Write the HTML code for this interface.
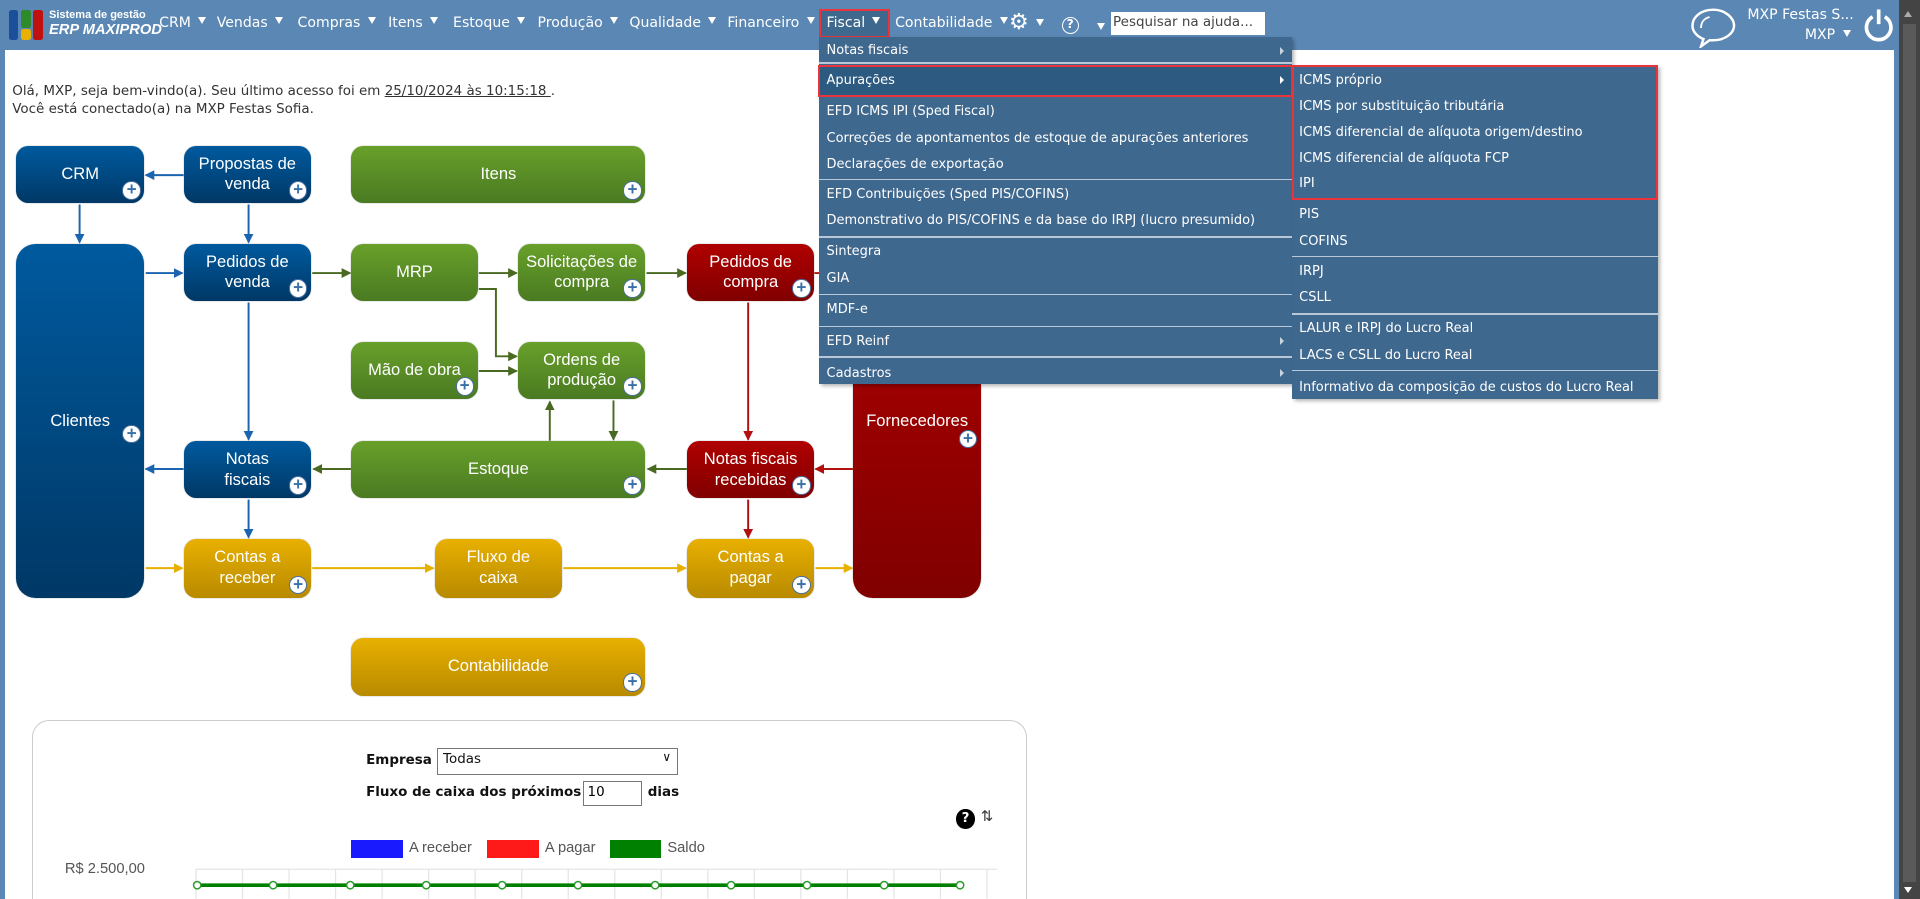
<!DOCTYPE html>
<html><head><meta charset="utf-8">
<style>
html{zoom:1.22449;overflow:hidden;height:734px;width:1568px}
*{box-sizing:border-box;margin:0;padding:0}
body{width:1568px;height:734px;overflow:hidden;position:relative;background:#fff;font-family:"DejaVu Sans","Liberation Sans",sans-serif;}
#wrap{position:absolute;left:0;top:0;width:1568px;height:734px;overflow:hidden}
.abs{position:absolute}
#top{left:0;top:0;width:1568px;height:41px;background:#5b87b4}
.nav{position:absolute;top:12px;color:#fff;font-size:11.5px;white-space:nowrap}
.tri{display:inline-block;width:0;height:0;border-left:4px solid transparent;border-right:4px solid transparent;border-top:6px solid #fff;margin-left:6px;vertical-align:2px}
.box{position:absolute;border-radius:10px;color:#fff;font-family:"Liberation Sans",sans-serif;font-size:13.5px;text-align:center;display:flex;align-items:center;justify-content:center;line-height:17px;box-shadow:0 0 1px #999}
.b{background:linear-gradient(#005a9e,#003866)}
.g{background:linear-gradient(#68a02a,#4a7a22)}
.r{background:linear-gradient(#b00000,#800000)}
.y{background:linear-gradient(#e8b000,#b88a00)}
.plus{position:absolute;right:3px;bottom:3px;width:15px;height:15px;border-radius:50%;background:#fff;border:1px solid #4a6fa0;color:#3a6fa8;font-weight:bold;font-size:14px;line-height:12px;text-align:center}
.menu{position:absolute;background:#3f688f;color:#fff;font-size:10.6px;box-shadow:2px 2px 3px rgba(0,0,0,.3)}
.mi{position:absolute;left:6px;white-space:nowrap}
.sep{position:absolute;left:0;right:0;height:1px;background:#b8c8d8}
.arr{position:absolute;right:6px;width:0;height:0;border-top:4px solid transparent;border-bottom:4px solid transparent;border-left:4px solid #c8d4e0}
.txt{font-size:11px;color:#333}
</style></head><body><div id="wrap">
<div id="top" class="abs"></div>
<div class="abs" style="left:7px;top:8px;width:8px;height:25px;background:#1c4f9a;border-radius:2px"></div>
<div class="abs" style="left:17px;top:8px;width:8px;height:15px;background:#2f8a2a;border-radius:2px"></div>
<div class="abs" style="left:17px;top:24px;width:8px;height:9px;background:#e8b000;border-radius:2px"></div>
<div class="abs" style="left:27px;top:8px;width:8px;height:25px;background:#c01010;border-radius:2px"></div>
<div class="abs" style="left:40px;top:7px;color:#fff;font-size:9px;font-weight:bold;font-family:'Liberation Sans',sans-serif">Sistema de gestão</div>
<div class="abs" style="left:40px;top:18px;color:#fff;font-size:12px;font-weight:bold;font-style:italic;font-family:'Liberation Sans',sans-serif">ERP MAXIPROD</div>
<div class="nav" style="left:130px">CRM<span class="tri"></span></div>
<div class="nav" style="left:177px">Vendas<span class="tri"></span></div>
<div class="nav" style="left:243px">Compras<span class="tri"></span></div>
<div class="nav" style="left:317px">Itens<span class="tri"></span></div>
<div class="nav" style="left:370px">Estoque<span class="tri"></span></div>
<div class="nav" style="left:439px">Produção<span class="tri"></span></div>
<div class="nav" style="left:514px">Qualidade<span class="tri"></span></div>
<div class="nav" style="left:594px">Financeiro<span class="tri"></span></div>
<div class="abs" style="left:669px;top:7px;width:58px;height:24px;background:#3f688f;border:2px solid #e8343a"></div>
<div class="nav" style="left:675px">Fiscal<span class="tri"></span></div>
<div class="nav" style="left:731px">Contabilidade<span class="tri"></span></div>
<div class="nav" style="left:824px;top:8px;font-size:18px">⚙<span class="tri"></span></div>
<div class="abs" style="left:867px;top:14px;width:14px;height:14px;border:1.5px solid #fff;border-radius:50%;color:#fff;font-size:10px;text-align:center;line-height:11px;font-weight:bold">?</div>
<div class="abs" style="left:890px;top:12px"><span class="tri"></span></div>
<div class="abs" style="left:907px;top:10px;width:126px;height:19px;background:#fff;font-size:11px;color:#444;padding:2px 2px">Pesquisar na ajuda...</div>
<svg class="abs" style="left:1380px;top:5px" width="38" height="34" viewBox="0 0 38 34"><path d="M19 3C9 3 2 9 2 16c0 5 4 9 9 11l-2 6 7-5c1 0 2 0 3 0 10 0 17-6 17-12S29 3 19 3z" fill="none" stroke="#fff" stroke-width="2"/><path d="M9 18c0-5 3-8 7-9" fill="none" stroke="#fff" stroke-width="1.5"/></svg>
<div class="abs" style="left:1427px;top:6px;color:#fff;font-size:11.5px">MXP Festas S...</div>
<div class="abs" style="left:1474px;top:22px;color:#fff;font-size:11.5px">MXP<span class="tri"></span></div>
<svg class="abs" style="left:1522px;top:6px" width="24" height="28" viewBox="0 0 24 28"><path d="M7 8A10 10 0 1 0 17 8" fill="none" stroke="#fff" stroke-width="3"/><path d="M12 2v12" stroke="#fff" stroke-width="3"/></svg>
<div class="abs" style="left:0;top:41px;width:4px;height:693px;background:#5b87b4"></div>
<div class="abs" style="left:1547px;top:0;width:4px;height:734px;background:#5b87b4"></div>
<div class="abs" style="left:1551px;top:0;width:17px;height:734px;background:#444"></div>
<div class="abs" style="left:1555px;top:9px;width:0;height:0;border-left:4px solid transparent;border-right:4px solid transparent;border-bottom:5px solid #aaa"></div>
<div class="abs" style="left:1554px;top:20px;width:11px;height:700px;background:#5a5a5a"></div>
<div class="abs" style="left:1555px;top:724px;width:0;height:0;border-left:4px solid transparent;border-right:4px solid transparent;border-top:5px solid #fff"></div>

<div class="abs txt" style="left:10px;top:69px">Olá, MXP, seja bem-vindo(a). Seu último acesso foi em <u>25/10/2024 às 10:15:18 </u>.</div>
<div class="abs txt" style="left:10px;top:83px">Você está conectado(a) na MXP Festas Sofia.</div>

<svg class="abs" style="left:0;top:0" width="840" height="600">
<defs>
<marker id="mb" markerWidth="8" markerHeight="8" refX="7" refY="4" orient="auto" markerUnits="userSpaceOnUse"><path d="M0 0L8 4L0 8z" fill="#1a64b0"/></marker>
<marker id="mg" markerWidth="8" markerHeight="8" refX="7" refY="4" orient="auto" markerUnits="userSpaceOnUse"><path d="M0 0L8 4L0 8z" fill="#4a6a22"/></marker>
<marker id="mr" markerWidth="8" markerHeight="8" refX="7" refY="4" orient="auto" markerUnits="userSpaceOnUse"><path d="M0 0L8 4L0 8z" fill="#b01010"/></marker>
<marker id="my" markerWidth="8" markerHeight="8" refX="7" refY="4" orient="auto" markerUnits="userSpaceOnUse"><path d="M0 0L8 4L0 8z" fill="#e8b000"/></marker>
</defs>
<g stroke="#1a64b0" stroke-width="1.6" fill="none">
<path d="M150 143H119" marker-end="url(#mb)"/>
<path d="M65 167V198" marker-end="url(#mb)"/>
<path d="M203 167V198" marker-end="url(#mb)"/>
<path d="M119 223H149" marker-end="url(#mb)"/>
<path d="M203 247V359" marker-end="url(#mb)"/>
<path d="M150 383H119" marker-end="url(#mb)"/>
<path d="M203 408V439" marker-end="url(#mb)"/>
</g>
<g stroke="#4a6a22" stroke-width="1.6" fill="none">
<path d="M255 223H286" marker-end="url(#mg)"/>
<path d="M391 223H422" marker-end="url(#mg)"/>
<path d="M528 223H560" marker-end="url(#mg)"/>
<path d="M391 236H405V291H422" marker-end="url(#mg)"/>
<path d="M391 303H422" marker-end="url(#mg)"/>
<path d="M449 360V328" marker-end="url(#mg)"/>
<path d="M501 327V359" marker-end="url(#mg)"/>
<path d="M287 383H256" marker-end="url(#mg)"/>
<path d="M561 383H529" marker-end="url(#mg)"/>
</g>
<g stroke="#b01010" stroke-width="1.6" fill="none">
<path d="M665 223H697"/>
<path d="M611 247V359" marker-end="url(#mr)"/>
<path d="M697 383H666" marker-end="url(#mr)"/>
<path d="M611 408V439" marker-end="url(#mr)"/>
</g>
<g stroke="#e8b000" stroke-width="1.6" fill="none">
<path d="M119 464H149" marker-end="url(#my)"/>
<path d="M255 464H354" marker-end="url(#my)"/>
<path d="M460 464H560" marker-end="url(#my)"/>
<path d="M666 464H696" marker-end="url(#my)"/>
</g>
</svg>

<div class="box b" style="left:13px;top:119px;width:105px;height:47px">CRM<div class="plus">+</div></div>
<div class="box b" style="left:150px;top:119px;width:104px;height:47px">Propostas de<br>venda<div class="plus">+</div></div>
<div class="box g" style="left:287px;top:119px;width:240px;height:47px">Itens<div class="plus">+</div></div>
<div class="box b" style="left:13px;top:199px;width:105px;height:289px;border-radius:16px;align-items:flex-start;padding-top:137px">Clientes<div class="plus" style="bottom:126px">+</div></div>
<div class="box b" style="left:150px;top:199px;width:104px;height:47px">Pedidos de<br>venda<div class="plus">+</div></div>
<div class="box g" style="left:287px;top:199px;width:103px;height:47px">MRP</div>
<div class="box g" style="left:423px;top:199px;width:104px;height:47px">Solicitações de<br>compra<div class="plus">+</div></div>
<div class="box r" style="left:561px;top:199px;width:104px;height:47px">Pedidos de<br>compra<div class="plus">+</div></div>
<div class="box r" style="left:697px;top:199px;width:104px;height:289px;border-radius:16px;align-items:flex-start;padding-top:137px">Fornecedores<div class="plus" style="bottom:122px">+</div></div>
<div class="box g" style="left:287px;top:279px;width:103px;height:47px">Mão de obra<div class="plus">+</div></div>
<div class="box g" style="left:423px;top:279px;width:104px;height:47px">Ordens de<br>produção<div class="plus">+</div></div>
<div class="box b" style="left:150px;top:360px;width:104px;height:47px">Notas<br>fiscais<div class="plus">+</div></div>
<div class="box g" style="left:287px;top:360px;width:240px;height:47px">Estoque<div class="plus">+</div></div>
<div class="box r" style="left:561px;top:360px;width:104px;height:47px">Notas fiscais<br>recebidas<div class="plus">+</div></div>
<div class="box y" style="left:150px;top:440px;width:104px;height:48px">Contas a<br>receber<div class="plus">+</div></div>
<div class="box y" style="left:355px;top:440px;width:104px;height:48px">Fluxo de<br>caixa</div>
<div class="box y" style="left:561px;top:440px;width:104px;height:48px">Contas a<br>pagar<div class="plus">+</div></div>
<div class="box y" style="left:287px;top:521px;width:240px;height:47px">Contabilidade<div class="plus">+</div></div>

<div class="abs" style="left:26px;top:588px;width:813px;height:147px;border:1px solid #ccc;border-bottom:none;border-radius:14px 14px 0 0"></div>
<div class="abs" style="left:299px;top:615px;font-size:11px;font-weight:bold;color:#111">Empresa</div>
<div class="abs" style="left:357px;top:611px;width:197px;height:22px;border:1px solid #777;font-size:11px;padding:2px 4px;color:#111">Todas<span style="position:absolute;right:5px;top:1px;font-size:10px">&#8744;</span></div>
<div class="abs" style="left:299px;top:641px;font-size:11px;font-weight:bold;color:#111">Fluxo de caixa dos próximos</div>
<div class="abs" style="left:476px;top:638px;width:48px;height:20px;border:1px solid #777;font-size:11px;padding:2px 3px">10</div>
<div class="abs" style="left:529px;top:641px;font-size:11px;font-weight:bold;color:#111">dias</div>
<div class="abs" style="left:781px;top:661px;width:15px;height:16px;border-radius:50%;background:#000;color:#fff;font-size:11px;font-weight:bold;text-align:center;line-height:16px">?</div>
<div class="abs" style="left:801px;top:660px;font-size:12px;color:#333">⇅</div>
<div class="abs" style="left:287px;top:686px;width:42px;height:15px;background:#1a1aff"></div>
<div class="abs" style="left:334px;top:686px;font-size:12px;color:#555;font-family:'Liberation Sans',sans-serif">A receber</div>
<div class="abs" style="left:398px;top:686px;width:42px;height:15px;background:#ff1a1a"></div>
<div class="abs" style="left:445px;top:686px;font-size:12px;color:#555;font-family:'Liberation Sans',sans-serif">A pagar</div>
<div class="abs" style="left:498px;top:686px;width:42px;height:15px;background:#008000"></div>
<div class="abs" style="left:545px;top:686px;font-size:12px;color:#555;font-family:'Liberation Sans',sans-serif">Saldo</div>
<div class="abs" style="left:53px;top:703px;font-size:12px;color:#555;font-family:'Liberation Sans',sans-serif">R$ 2.500,00</div>
<svg class="abs" style="left:120px;top:700px" width="700" height="34">
<g stroke="#e4e4e4"><path d="M40 10H694"/><path d="M40 10V34M78 10V34M116 10V34M154 10V34M192 10V34M230 10V34M268 10V34M306 10V34M344 10V34M382 10V34M420 10V34M458 10V34M496 10V34M534 10V34M572 10V34M610 10V34M648 10V34M686 10V34"/></g>
<path d="M41 23H665" stroke="#008000" stroke-width="3"/>
<g fill="#fff" stroke="#2a9a2a" stroke-width="1.2">
<circle cx="41" cy="23" r="3"/><circle cx="103" cy="23" r="3"/><circle cx="166" cy="23" r="3"/><circle cx="228" cy="23" r="3"/><circle cx="290" cy="23" r="3"/><circle cx="352" cy="23" r="3"/><circle cx="415" cy="23" r="3"/><circle cx="477" cy="23" r="3"/><circle cx="539" cy="23" r="3"/><circle cx="602" cy="23" r="3"/><circle cx="664" cy="23" r="3"/></g>
</svg>

<div class="menu" style="left:669px;top:30px;width:386px;height:284px">
<div class="mi" style="top:5px">Notas fiscais</div><div class="arr" style="top:8px"></div>
<div class="sep" style="top:21px"></div>
<div class="abs" style="left:-1px;top:23px;width:388px;height:26px;background:#2d5a80;border:2px solid #e8343a"></div>
<div class="mi" style="top:30px">Apurações</div><div class="arr" style="top:32px;border-left-color:#fff"></div>
<div class="mi" style="top:55px">EFD ICMS IPI (Sped Fiscal)</div>
<div class="mi" style="top:77px">Correções de apontamentos de estoque de apurações anteriores</div>
<div class="mi" style="top:98px">Declarações de exportação</div>
<div class="sep" style="top:116px"></div>
<div class="mi" style="top:123px">EFD Contribuições (Sped PIS/COFINS)</div>
<div class="mi" style="top:144px">Demonstrativo do PIS/COFINS e da base do IRPJ (lucro presumido)</div>
<div class="sep" style="top:163px"></div>
<div class="mi" style="top:169px">Sintegra</div>
<div class="mi" style="top:191px">GIA</div>
<div class="sep" style="top:210px"></div>
<div class="mi" style="top:217px">MDF-e</div>
<div class="sep" style="top:236px"></div>
<div class="mi" style="top:243px">EFD Reinf</div><div class="arr" style="top:245px"></div>
<div class="sep" style="top:261px"></div>
<div class="mi" style="top:269px">Cadastros</div><div class="arr" style="top:271px"></div>
</div>
<div class="menu" style="left:1055px;top:53px;width:299px;height:273px">
<div class="abs" style="left:0;top:0;width:299px;height:110px;border:2px solid #e8343a"></div>
<div class="mi" style="top:7px">ICMS próprio</div>
<div class="mi" style="top:28px">ICMS por substituição tributária</div>
<div class="mi" style="top:49px">ICMS diferencial de alíquota origem/destino</div>
<div class="mi" style="top:70px">ICMS diferencial de alíquota FCP</div>
<div class="mi" style="top:91px">IPI</div>
<div class="mi" style="top:116px">PIS</div>
<div class="mi" style="top:138px">COFINS</div>
<div class="sep" style="top:156px"></div>
<div class="mi" style="top:163px">IRPJ</div>
<div class="mi" style="top:184px">CSLL</div>
<div class="sep" style="top:203px"></div>
<div class="mi" style="top:209px">LALUR e IRPJ do Lucro Real</div>
<div class="mi" style="top:231px">LACS e CSLL do Lucro Real</div>
<div class="sep" style="top:249px"></div>
<div class="mi" style="top:257px">Informativo da composição de custos do Lucro Real</div>
</div>
</div></body></html>
